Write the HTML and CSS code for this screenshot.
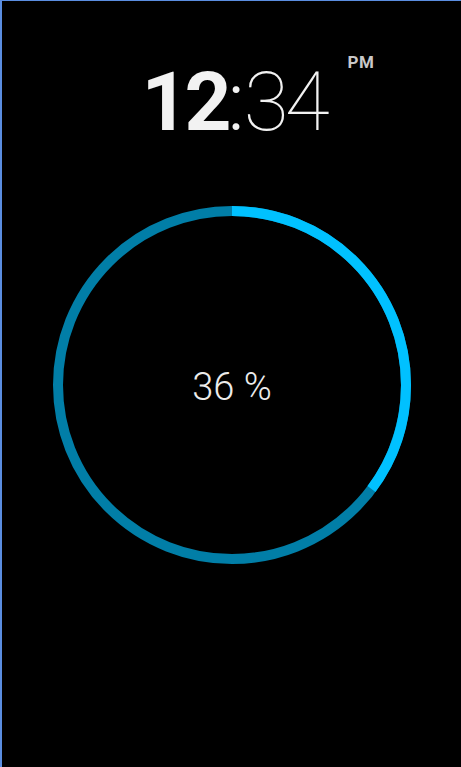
FILE: index.html
```html
<!DOCTYPE html>
<html>
<head>
<meta charset="utf-8">
<link rel="stylesheet" href="styles.css">
</head>
<body>
<div class="screen">
  <div class="clock">
    <div class="time"><span class="hours">12</span><span class="colon">:</span><span class="mins">34</span><span class="ampm">PM</span></div>
  </div>
  <div class="dial">
    <svg class="ring" width="358" height="358" viewBox="0 0 358 358">
      <circle cx="179" cy="179" r="174" fill="none" stroke="#017ea7" stroke-width="10"/>
      <circle cx="179" cy="179" r="174" fill="none" stroke="#00c1ff" stroke-width="10" pathLength="100" stroke-dasharray="35.2 100" transform="rotate(-90 179 179)"/>
    </svg>
    <div class="pct">36 %</div>
  </div>
</div>
</body>
</html>
```
FILE: styles.css
```css
html, body {
  margin: 0;
  padding: 0;
  background: #000;
}
.screen {
  width: 459px;
  height: 766px;
  background: #000;
  border-top: 1px solid #5a8de0;
  border-left: 2px solid #5a8de0;
  font-family: Roboto, "Liberation Sans", sans-serif;
  color: #f2f2f2;
  overflow: hidden;
}
.clock {
  display: flex;
  justify-content: center;
  padding-top: 60px;
  padding-left: 4px;
}
.time {
  position: relative;
  font-size: 82px;
  line-height: 82px;
  height: 82px;
  letter-spacing: -4px;
}
.hours {
  font-weight: 700;
}
.colon {
  font-weight: 300;
  letter-spacing: -1px;
}
.mins {
  font-weight: 100;
}
.ampm {
  position: absolute;
  left: 100%;
  top: -7px;
  margin-left: 22px;
  font-size: 17px;
  line-height: 17px;
  font-weight: 700;
  letter-spacing: 0.5px;
  color: #c8c8c8;
}
.dial {
  position: relative;
  width: 358px;
  height: 358px;
  margin-left: 51px;
  margin-top: 63px;
}
.ring {
  display: block;
}
.pct {
  position: absolute;
  left: 0;
  right: 0;
  top: 0;
  bottom: 0;
  display: flex;
  align-items: center;
  justify-content: center;
  font-size: 38px;
  font-weight: 300;
  color: #ececec;
  padding-top: 4px;
}
```
